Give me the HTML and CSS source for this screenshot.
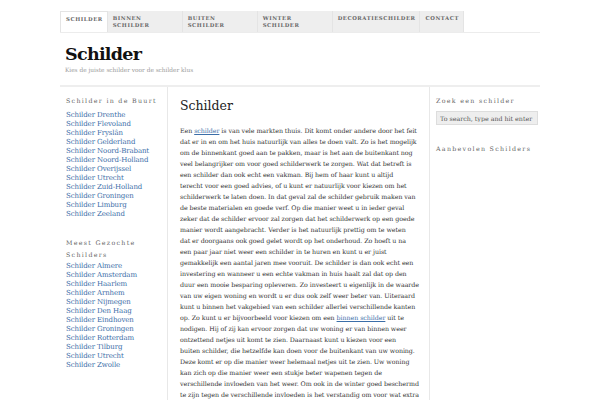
FILE: index.html
```html
<!DOCTYPE html>
<html lang="nl">
<head>
<meta charset="utf-8">
<title>Schilder</title>
<link rel="stylesheet" href="styles.css">
</head>
<body>
<div class="page">
  <nav class="nav">
    <a class="tab active" href="#">Schilder</a>
    <a class="tab wide" href="#">Binnen Schilder</a>
    <a class="tab wide" href="#">Buiten Schilder</a>
    <a class="tab wide" href="#">Winter Schilder</a>
    <a class="tab" href="#">Decoratieschilder</a>
    <a class="tab" href="#">Contact</a>
  </nav>
  <header class="header">
    <h1 class="site-title">Schilder</h1>
    <p class="tagline">Kies de juiste schilder voor de schilder klus</p>
  </header>
  <div class="main">
    <aside class="sidebar left">
      <h3 class="widget-title">Schilder in de Buurt</h3>
      <ul class="links">
        <li><a href="#">Schilder Drenthe</a></li>
        <li><a href="#">Schilder Flevoland</a></li>
        <li><a href="#">Schilder Fryslân</a></li>
        <li><a href="#">Schilder Gelderland</a></li>
        <li><a href="#">Schilder Noord-Brabant</a></li>
        <li><a href="#">Schilder Noord-Holland</a></li>
        <li><a href="#">Schilder Overijssel</a></li>
        <li><a href="#">Schilder Utrecht</a></li>
        <li><a href="#">Schilder Zuid-Holland</a></li>
        <li><a href="#">Schilder Groningen</a></li>
        <li><a href="#">Schilder Limburg</a></li>
        <li><a href="#">Schilder Zeeland</a></li>
      </ul>
      <h3 class="widget-title second">Meest Gezochte Schilders</h3>
      <ul class="links">
        <li><a href="#">Schilder Almere</a></li>
        <li><a href="#">Schilder Amsterdam</a></li>
        <li><a href="#">Schilder Haarlem</a></li>
        <li><a href="#">Schilder Arnhem</a></li>
        <li><a href="#">Schilder Nijmegen</a></li>
        <li><a href="#">Schilder Den Haag</a></li>
        <li><a href="#">Schilder Eindhoven</a></li>
        <li><a href="#">Schilder Groningen</a></li>
        <li><a href="#">Schilder Rotterdam</a></li>
        <li><a href="#">Schilder Tilburg</a></li>
        <li><a href="#">Schilder Utrecht</a></li>
        <li><a href="#">Schilder Zwolle</a></li>
      </ul>
    </aside>
    <main class="content">
      <h2 class="entry-title">Schilder</h2>
      <p class="entry">Een <a href="#">schilder</a> is van vele markten thuis. Dit komt onder andere door het feit<br>
dat er in en om het huis natuurlijk van alles te doen valt. Zo is het mogelijk<br>
om de binnenkant goed aan te pakken, maar is het aan de buitenkant nog<br>
veel belangrijker om voor goed schilderwerk te zorgen. Wat dat betreft is<br>
een schilder dan ook echt een vakman. Bij hem of haar kunt u altijd<br>
terecht voor een goed advies, of u kunt er natuurlijk voor kiezen om het<br>
schilderwerk te laten doen. In dat geval zal de schilder gebruik maken van<br>
de beste materialen en goede verf. Op die manier weet u in ieder geval<br>
zeker dat de schilder ervoor zal zorgen dat het schilderwerk op een goede<br>
manier wordt aangebracht. Verder is het natuurlijk prettig om te weten<br>
dat er doorgaans ook goed gelet wordt op het onderhoud. Zo hoeft u na<br>
een paar jaar niet weer een schilder in te huren en kunt u er juist<br>
gemakkelijk een aantal jaren mee vooruit. De schilder is dan ook echt een<br>
investering en wanneer u een echte vakman in huis haalt zal dat op den<br>
duur een mooie besparing opleveren. Zo investeert u eigenlijk in de waarde<br>
van uw eigen woning en wordt u er dus ook zelf weer beter van. Uiteraard<br>
kunt u binnen het vakgebied van een schilder allerlei verschillende kanten<br>
op. Zo kunt u er bijvoorbeeld voor kiezen om een <a href="#">binnen schilder</a> uit te<br>
nodigen. Hij of zij kan ervoor zorgen dat uw woning er van binnen weer<br>
ontzettend netjes uit komt te zien. Daarnaast kunt u kiezen voor een<br>
buiten schilder, die hetzelfde kan doen voor de buitenkant van uw woning.<br>
Deze komt er op die manier weer helemaal netjes uit te zien. Uw woning<br>
kan zich op die manier weer een stukje beter wapenen tegen de<br>
verschillende invloeden van het weer. Om ook in de winter goed beschermd<br>
te zijn tegen de verschillende invloeden is het verstandig om voor wat extra</p>
    </main>
    <aside class="sidebar right">
      <h3 class="widget-title">Zoek een schilder</h3>
      <input class="search" type="text" placeholder="To search, type and hit enter">
      <h3 class="widget-title recommended">Aanbevolen Schilders</h3>
    </aside>
  </div>
</div>
</body>
</html>
```

FILE: styles.css
```css
* { box-sizing: border-box; }
html, body { margin: 0; padding: 0; background: #fff; }
body {
  font-family: "DejaVu Serif", serif;
  color: #333;
  overflow: hidden;
}
.page {
  width: 480px;
  margin: 0 auto;
}
.nav {
  display: flex;
  margin-top: 11px;
  border-bottom: 1px solid #ececec;
}
.tab {
  display: block;
  padding: 4px 4px 3px 5px;
  min-height: 21px;
  background: #eee;
  border-right: 1px solid #e4e4e4;
  color: #666;
  text-decoration: none;
  text-transform: uppercase;
  font-size: 5.3px;
  font-weight: bold;
  letter-spacing: 0.55px;
  line-height: 7px;
}
.tab.active {
  background: #fff;
  border: 1px solid #e4e4e4;
  border-bottom: none;
}
.tab.wide { width: 75px; }
.header {
  padding: 9px 5px 11px;
}
.site-title {
  margin: 0;
  font-size: 17.5px;
  letter-spacing: -0.7px;
  line-height: 24px;
  color: #111;
}
.tagline {
  margin: 0;
  font-size: 5.8px;
  color: #999;
  line-height: 8px;
}
.main {
  display: grid;
  grid-template-columns: 108px 262px 110px;
  border-top: 2px solid #eee;
  min-height: 320px;
}
.sidebar.left {
  padding: 8px 6px;
  border-right: 1px solid #e8e8e8;
}
.content {
  padding: 7px 6px 10px 12px;
  border-right: 1px solid #e8e8e8;
}
.sidebar.right {
  padding: 8px 6px;
}
.widget-title {
  margin: 0 0 4px;
  font-size: 6.3px;
  font-weight: normal;
  letter-spacing: 1.3px;
  color: #666;
  line-height: 12px;
}
.widget-title.second { margin-bottom: 1px; }
.links {
  list-style: none;
  margin: 0 0 18px;
  padding: 0;
  font-size: 7px;
  line-height: 9px;
  letter-spacing: -0.1px;
}
.links a, .entry a {
  color: #3b6ea8;
  text-decoration: none;
}
.entry a { text-decoration: underline; }
.entry-title {
  margin: 0 0 7px;
  font-size: 12.5px;
  font-weight: normal;
  color: #222;
  line-height: 24px;
}
.entry {
  margin: 0;
  font-size: 6.3px;
  letter-spacing: -0.05px;
  line-height: 11px;
  color: #333;
  white-space: nowrap;
}
.search {
  display: block;
  width: 102px;
  height: 14px;
  margin: 0 0 18px;
  padding: 0 3px;
  border: 1px solid #ddd;
  background: #eee;
  font-family: "DejaVu Serif", serif;
  font-size: 6.3px;
  color: #555;
}
.search::placeholder { color: #555; }
```
